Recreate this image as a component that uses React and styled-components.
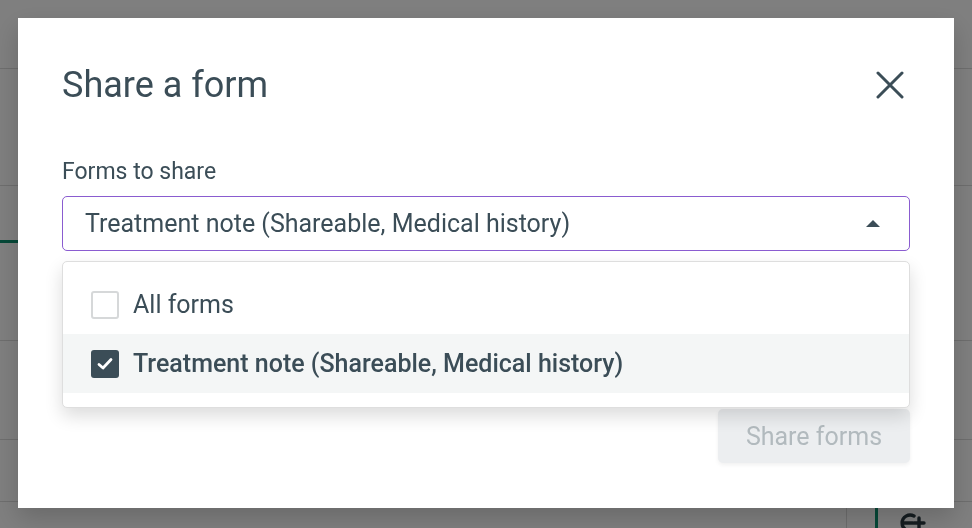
import React from "react";
import styled, { createGlobalStyle } from "styled-components";

const ink = "#3b4d57";

export default function App() {
  return (
    <>
      <GlobalStyle />
      <Page>
        <PageHeader />
        <PageRow $h={116} />
        <PageRow $h={154} $accent />
        <PageRow $h={98} />
        <PageRow $h={61} />
        <PageFooter>
          <FooterCell $w={847} $divider />
          <FooterCell $w={28} />
          <FooterCell $w={97} $green>
            <svg width="30" height="30" viewBox="0 0 30 30" fill="none">
              <path
                d="M16 9 A8 8 0 1 0 16 23"
                stroke="#2b3a42"
                strokeWidth="3.4"
                strokeLinecap="round"
              />
              <path
                d="M5 16 H15 M21 11 V21 M16 16 H26"
                stroke="#2b3a42"
                strokeWidth="3.4"
                strokeLinecap="round"
              />
            </svg>
          </FooterCell>
        </PageFooter>
      </Page>

      <Overlay />

      <Dialog>
        <Header>
          <Title>Share a form</Title>
          <CloseButton aria-label="Close">
            <svg width="28" height="28" viewBox="0 0 28 28" fill="none">
              <path
                d="M2 2 L26 26 M26 2 L2 26"
                stroke={ink}
                strokeWidth="3"
                strokeLinecap="round"
              />
            </svg>
          </CloseButton>
        </Header>

        <Field>
          <Label>Forms to share</Label>
          <SelectWrap>
            <Select>
              <SelectValue>Treatment note (Shareable, Medical history)</SelectValue>
              <Caret />
            </Select>

            <Menu>
              <Option>
                <Checkbox />
                <OptionText>All forms</OptionText>
              </Option>
              <Option $active>
                <Checkbox $checked>
                  <svg width="20" height="20" viewBox="0 0 20 20" fill="none">
                    <path
                      d="M4 10.5 L8 14 L16 5.5"
                      stroke="#fff"
                      strokeWidth="2.8"
                      strokeLinecap="round"
                      strokeLinejoin="round"
                    />
                  </svg>
                </Checkbox>
                <OptionText $bold>Treatment note (Shareable, Medical history)</OptionText>
              </Option>
            </Menu>
          </SelectWrap>
        </Field>

        <Actions>
          <ShareButton disabled>Share forms</ShareButton>
        </Actions>
      </Dialog>
    </>
  );
}

const GlobalStyle = createGlobalStyle`
  html, body {
    margin: 0;
    padding: 0;
    width: 972px;
    height: 528px;
    overflow: hidden;
    background: #ffffff;
    font-family: Roboto, "Liberation Sans", sans-serif;
  }
`;

const Page = styled.div`
  width: 972px;
  height: 528px;
  background: #ffffff;
  display: flex;
  flex-direction: column;
`;

const PageHeader = styled.div`
  height: 68px;
  border-bottom: 1px solid #dcdcdc;
  flex-shrink: 0;
`;

const PageRow = styled.div`
  height: ${(p) => p.$h}px;
  border-bottom: 1px solid #dcdcdc;
  flex-shrink: 0;
  position: relative;
  ${(p) =>
    p.$accent &&
    `
    &::before {
      content: "";
      position: absolute;
      left: 0;
      top: 54px;
      width: 60px;
      height: 3px;
      background: #0c9170;
    }
  `}
`;

const PageFooter = styled.div`
  flex: 1;
  display: flex;
`;

const FooterCell = styled.div`
  box-sizing: border-box;
  width: ${(p) => p.$w}px;
  flex-shrink: 0;
  border-right: ${(p) => (p.$divider ? "1px solid #dcdcdc" : "none")};
  border-left: ${(p) => (p.$green ? "3px solid #0c9170" : "none")};
  display: flex;
  align-items: flex-start;
  padding-left: 20px;
  padding-top: 5px;
`;

const Overlay = styled.div`
  position: fixed;
  inset: 0;
  background: rgba(0, 0, 0, 0.5);
`;

const Dialog = styled.div`
  position: fixed;
  left: 18px;
  top: 18px;
  width: 936px;
  height: 490px;
  box-sizing: border-box;
  background: #ffffff;
  padding: 44px 44px 0 44px;
  box-shadow: 0 10px 24px rgba(0, 0, 0, 0.18);
  display: flex;
  flex-direction: column;
  color: ${ink};
`;

const Header = styled.div`
  display: flex;
  align-items: center;
  justify-content: space-between;
  height: 46px;
`;

const Title = styled.h2`
  margin: 0;
  font-size: 36px;
  font-weight: 400;
  line-height: 46px;
  color: ${ink};
`;

const CloseButton = styled.button`
  border: none;
  background: none;
  padding: 0;
  margin-right: 6px;
  width: 28px;
  height: 28px;
  display: flex;
  align-items: center;
  justify-content: center;
  cursor: pointer;
`;

const Field = styled.div`
  margin-top: 50px;
  display: flex;
  flex-direction: column;
  gap: 11px;
`;

const Label = styled.label`
  font-size: 23px;
  line-height: 27px;
  color: ${ink};
`;

const SelectWrap = styled.div`
  position: relative;
`;

const Select = styled.div`
  height: 55px;
  box-sizing: border-box;
  border: 1px solid #8a5cd0;
  border-radius: 5px;
  display: flex;
  align-items: center;
  justify-content: space-between;
  padding: 0 29px 0 22px;
`;

const SelectValue = styled.span`
  font-size: 25px;
  color: ${ink};
`;

const Caret = styled.span`
  width: 0;
  height: 0;
  border-left: 7px solid transparent;
  border-right: 7px solid transparent;
  border-bottom: 7px solid ${ink};
`;

const Menu = styled.div`
  position: absolute;
  left: 0;
  right: 0;
  top: 65px;
  background: #ffffff;
  border: 1px solid #dedede;
  border-radius: 5px;
  padding: 13px 0 14px;
  box-shadow: 0 8px 18px rgba(0, 0, 0, 0.14);
  z-index: 2;
`;

const Option = styled.div`
  height: 59px;
  display: flex;
  align-items: center;
  gap: 14px;
  padding-left: 28px;
  background: ${(p) => (p.$active ? "#f4f6f6" : "transparent")};
`;

const Checkbox = styled.span`
  width: 28px;
  height: 28px;
  box-sizing: border-box;
  border-radius: 3px;
  border: ${(p) => (p.$checked ? "none" : "2px solid #d6d8d9")};
  background: ${(p) => (p.$checked ? ink : "#fff")};
  display: flex;
  align-items: center;
  justify-content: center;
`;

const OptionText = styled.span`
  font-size: 25px;
  font-weight: ${(p) => (p.$bold ? 500 : 400)};
  color: ${ink};
`;

const Actions = styled.div`
  margin-top: 158px;
  display: flex;
  justify-content: flex-end;
`;

const ShareButton = styled.button`
  width: 192px;
  height: 54px;
  border: none;
  border-radius: 5px;
  background: #eceef0;
  color: #b2babe;
  font-family: Roboto, "Liberation Sans", sans-serif;
  font-size: 25px;
  box-shadow: 0 2px 4px rgba(0, 0, 0, 0.06);
`;
